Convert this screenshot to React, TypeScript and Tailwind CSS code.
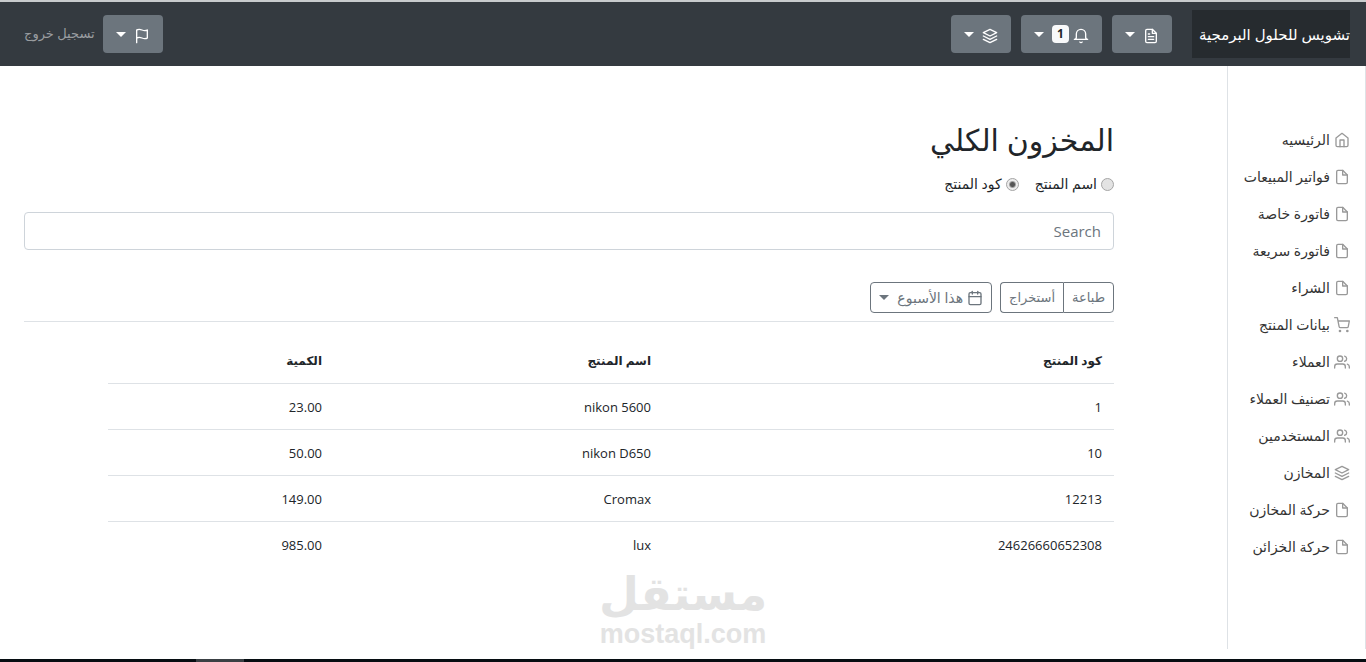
import { useState } from 'react'
import type { ReactNode } from 'react'
import type { IconType } from 'react-icons'
import {
  FiCalendar,
  FiFile,
  FiFileText,
  FiFlag,
  FiHome,
  FiLayers,
  FiShoppingCart,
  FiUsers,
} from 'react-icons/fi'

const links: { label: string; icon: IconType }[] = [
  { label: 'الرئيسيه', icon: FiHome },
  { label: 'فواتير المبيعات', icon: FiFile },
  { label: 'فاتورة خاصة', icon: FiFile },
  { label: 'فاتورة سريعة', icon: FiFile },
  { label: 'الشراء', icon: FiFile },
  { label: 'بيانات المنتج', icon: FiShoppingCart },
  { label: 'العملاء', icon: FiUsers },
  { label: 'تصنيف العملاء', icon: FiUsers },
  { label: 'المستخدمين', icon: FiUsers },
  { label: 'المخازن', icon: FiLayers },
  { label: 'حركة المخازن', icon: FiFile },
  { label: 'حركة الخزائن', icon: FiFile },
]

const products = [
  { code: '1', name: 'nikon 5600', qty: '23.00' },
  { code: '10', name: 'nikon D650', qty: '50.00' },
  { code: '12213', name: 'Cromax', qty: '149.00' },
  { code: '24626660652308', name: 'lux', qty: '985.00' },
]

function Caret() {
  return <span className="border-x-[5px] border-t-[5px] border-x-transparent border-t-current" />
}

function BellIcon() {
  return (
    <svg width="16" height="16" viewBox="0 0 24 24" fill="none" stroke="currentColor" strokeWidth="2" strokeLinecap="round" strokeLinejoin="round">
      <path d="M22 17H2a3 3 0 0 0 3-3V9a7 7 0 0 1 14 0v5a3 3 0 0 0 3 3zm-8.27 4a2 2 0 0 1-3.46 0" />
    </svg>
  )
}

function NavButton({ label, children }: { label: string; children: ReactNode }) {
  return (
    <button type="button" aria-label={label} className="flex h-[38px] items-center rounded bg-[#6c757d] px-[13px] pt-1 text-white">
      {children}
      <span className="mb-1 ms-2 flex"><Caret /></span>
    </button>
  )
}

function Radio({ id, label, checked, onChange }: { id: string; label: string; checked: boolean; onChange: () => void }) {
  return (
    <div className="flex items-center gap-1">
      <input
        id={id}
        type="radio"
        name="searchBy"
        checked={checked}
        onChange={onChange}
        className="size-[13px] appearance-none rounded-full border border-[#a5a5a5] bg-[#e3e3e3] checked:bg-[radial-gradient(circle,#555_2px,#ececec_4px)]"
      />
      <label htmlFor={id}>{label}</label>
    </div>
  )
}

export default function App() {
  const [searchBy, setSearchBy] = useState('code')
  const [query, setQuery] = useState('')

  return (
    <div dir="rtl" className="relative flex min-h-screen flex-col bg-white font-['Open_Sans','DejaVu_Sans',sans-serif] text-[13px] text-[#212529]">
      <header className="flex h-[66px] items-center border-t-2 border-[#c8cbcd] bg-[#343a40] ps-4 pe-6">
        <a href="#" className="flex h-12 w-[158px] items-center justify-start whitespace-nowrap bg-[#262b2f] text-[15px] text-white">
          تشويس للحلول البرمجية
        </a>
        <div className="ms-5 flex gap-[10px]">
          <NavButton label="الفواتير"><FiFileText size={16} /></NavButton>
          <NavButton label="التنبيهات">
            <BellIcon />
            <span className="mb-1 ms-1 flex h-[18px] w-[17px] items-center justify-center rounded bg-[#f8f9fa] text-xs font-bold text-[#212529]">1</span>
          </NavButton>
          <NavButton label="المخازن"><FiLayers size={16} /></NavButton>
        </div>
        <div className="ms-auto flex items-center gap-2">
          <NavButton label="اللغة"><FiFlag size={16} /></NavButton>
          <a href="#" className="text-[#9a9da0]">تسجيل خروج</a>
        </div>
      </header>

      <div className="flex flex-1">
        <nav className="mb-[10px] w-[139px] shrink-0 border-x border-[#dee2e6] pt-[55px] text-sm">
          <ul>
            {links.map(({ label, icon: Icon }) => (
              <li key={label}>
                <a href="#" className="flex h-[37px] items-center gap-1 whitespace-nowrap ps-[15px] font-medium text-[#333]">
                  <Icon size={16} className="shrink-0 text-[#999]" />
                  {label}
                </a>
              </li>
            ))}
          </ul>
        </nav>

        <main className="flex-1 ps-[113px] pe-6 pt-[46px]">
          <h1 className="h-14 text-[30px] leading-[56px] font-medium">المخزون الكلي</h1>
          <div className="mt-[6px] flex h-5 items-center gap-4 text-sm">
            <Radio id="by-name" label="اسم المنتج" checked={searchBy === 'name'} onChange={() => setSearchBy('name')} />
            <Radio id="by-code" label="كود المنتج" checked={searchBy === 'code'} onChange={() => setSearchBy('code')} />
          </div>
          <input
            type="text"
            aria-label="Search"
            placeholder="Search"
            value={query}
            onChange={e => setQuery(e.target.value)}
            className="mt-[18px] block h-[38px] w-full rounded border border-[#ced4da] px-3 text-[15px] placeholder:text-[#6c757d] focus:outline-none"
          />

          <div className="mt-8 flex gap-2 border-b border-[#dee2e6] pb-2 text-[#6c757d]">
            <div className="flex h-[31px]">
              <button type="button" className="rounded-s-sm border border-[#6c757d] px-2">طباعة</button>
              <button type="button" className="rounded-e-sm border border-s-0 border-[#6c757d] px-2">أستخراج</button>
            </div>
            <button type="button" className="flex h-[31px] items-center gap-1 rounded-sm border border-[#6c757d] px-2 text-sm">
              <FiCalendar size={16} />
              هذا الأسبوع
              <span className="ms-1 flex"><Caret /></span>
            </button>
          </div>

          <table className="mt-[17px] w-[1006px] max-w-full table-fixed">
            <thead>
              <tr className="h-11 text-xs">
                <th className="w-[451px] px-3 text-start font-bold">كود المنتج</th>
                <th className="w-[329px] px-3 text-start font-bold">اسم المنتج</th>
                <th className="px-3 text-start font-bold">الكمية</th>
              </tr>
            </thead>
            <tbody>
              {products.map(p => (
                <tr key={p.code} className="h-[46px] border-t border-[#dee2e6]">
                  <td className="px-3 pt-[3px]">{p.code}</td>
                  <td className="px-3 pt-[3px]">{p.name}</td>
                  <td className="px-3 pt-[3px]">{p.qty}</td>
                </tr>
              ))}
            </tbody>
          </table>
        </main>
      </div>

      <div className="pointer-events-none absolute inset-x-0 bottom-3 flex flex-col items-center font-bold text-[#e3e3e3]">
        <span className="text-[46px] leading-[52px]">مستقل</span>
        <span className="font-['Liberation_Sans',sans-serif] text-[27px] leading-8">mostaql.com</span>
      </div>

      <footer dir="ltr" className="h-[3px] bg-[#060d12] ps-[196px]">
        <div className="h-full w-12 bg-[#3a4044]" />
      </footer>
    </div>
  )
}
